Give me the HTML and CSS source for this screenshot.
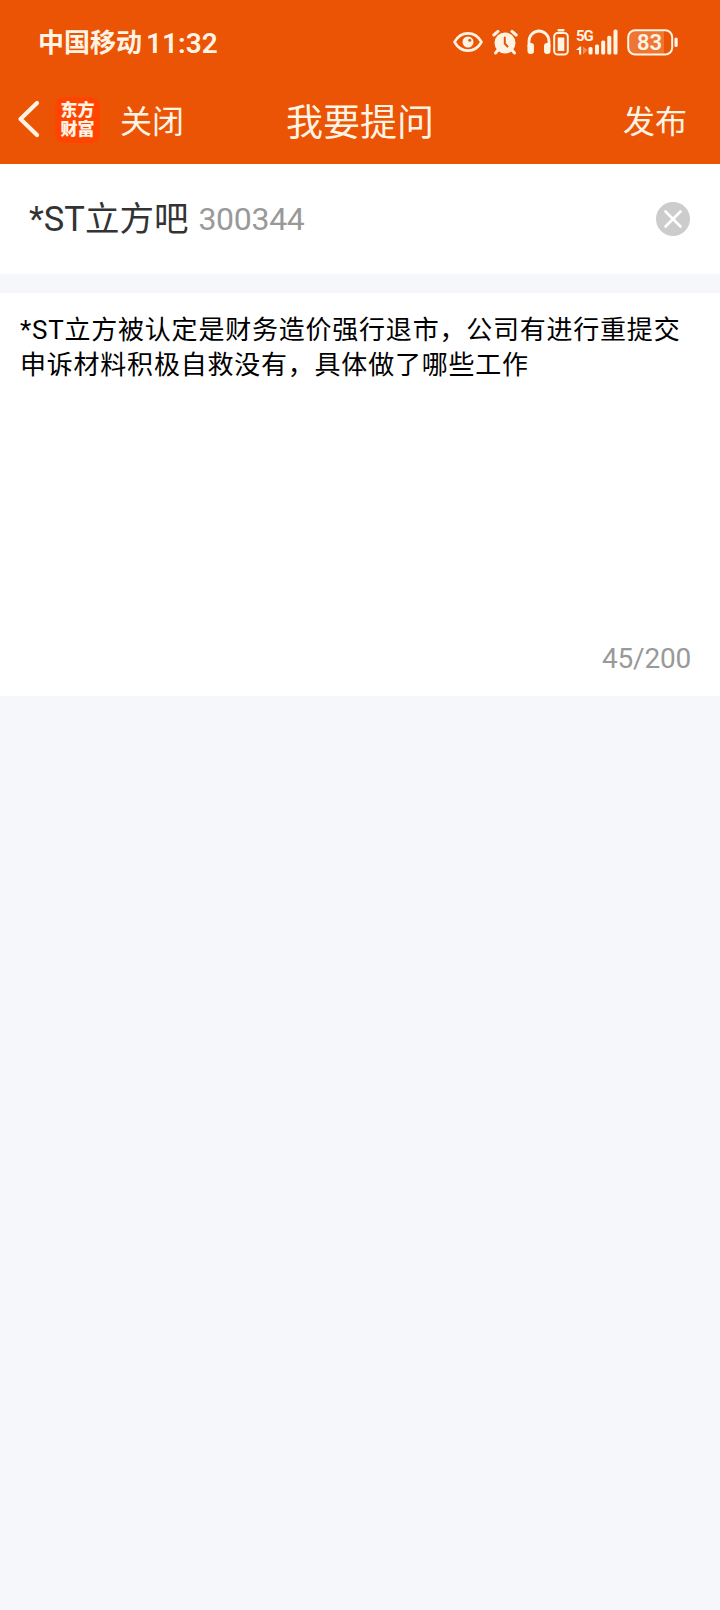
FILE: index.html
```html
<!DOCTYPE html>
<html lang="zh-CN">
<head>
    <meta charset="UTF-8">
    <meta name="viewport" content="width=device-width, initial-scale=1.0">
    <title>我要提问</title>
    <link rel="stylesheet" href="styles.css">
</head>
<body>
    <header class="header">
        <div class="status-bar">
            <span class="carrier">中国移动</span>
            <span class="clock">11:32</span>
            <div class="status-icons">
                <svg class="icon-eye" width="30" height="26" viewBox="0 0 30 26">
                    <path d="M1.5 13C8 1.5 22 1.5 28.5 13C22 24.5 8 24.5 1.5 13Z" fill="none" stroke="currentColor" stroke-width="2.6" stroke-linejoin="round"/>
                    <circle cx="15" cy="13" r="5.5" fill="currentColor"/>
                    <circle cx="16.8" cy="11.2" r="1.5" fill="#ea5404"/>
                </svg>
                <svg class="icon-alarm" width="26" height="26" viewBox="0 0 26 26">
                    <circle cx="13" cy="14" r="10.5" fill="currentColor"/>
                    <path d="M1.8 6L6 2.4M20 2.4L24.2 6" stroke="currentColor" stroke-width="3" stroke-linecap="round"/>
                    <path d="M6 21L3.5 24M20 21L22.5 24" stroke="currentColor" stroke-width="3" stroke-linecap="round"/>
                    <path d="M12.8 8.5V14.5L15.5 17.5" fill="none" stroke="#ea5404" stroke-width="2" stroke-linecap="round"/>
                </svg>
                <svg class="icon-headphones" width="24" height="26" viewBox="0 0 24 26">
                    <path d="M2 18V12.5A10 10.5 0 0 1 22 12.5V18" fill="none" stroke="currentColor" stroke-width="2.8"/>
                    <rect x="0.5" y="14" width="6.5" height="11" rx="3" fill="currentColor"/>
                    <rect x="17" y="14" width="6.5" height="11" rx="3" fill="currentColor"/>
                </svg>
                <svg class="icon-device" width="16" height="27" viewBox="0 0 16 27">
                    <rect x="4.5" y="0" width="7" height="2.5" rx="1" fill="currentColor"/>
                    <rect x="1.2" y="4" width="13.6" height="21.5" rx="3.5" fill="none" stroke="currentColor" stroke-width="2"/>
                    <rect x="4.7" y="8.5" width="6.6" height="13.5" fill="currentColor"/>
                </svg>
                <div class="signal">
                    <span class="network">5G</span>
                    <svg class="icon-signal" width="42" height="27" viewBox="0 0 42 27">
                        <path d="M0 21L4 17.5H5.2V25.5H3V21Z" fill="currentColor"/>
                        <path d="M7 17.5L11.5 21L7 25.5Z" fill="currentColor" opacity="0.4"/>
                        <rect x="12.5" y="18" width="4" height="7.5" rx="1.5" fill="currentColor"/>
                        <rect x="19" y="15.5" width="4" height="10" rx="1.5" fill="currentColor"/>
                        <rect x="25.2" y="11.5" width="4" height="14" rx="1.5" fill="currentColor"/>
                        <rect x="31.3" y="6.7" width="4" height="18.8" rx="1.5" fill="currentColor"/>
                        <rect x="37.5" y="0.5" width="4" height="25" rx="1.5" fill="currentColor"/>
                    </svg>
                </div>
                <svg class="icon-battery" width="52" height="27" viewBox="0 0 52 27">
                    <path d="M8 2H37V25H8A6 6 0 0 1 2 19V8A6 6 0 0 1 8 2Z" fill="currentColor" opacity="0.22"/>
                    <rect x="1.2" y="1.2" width="44" height="24.3" rx="7" fill="none" stroke="currentColor" stroke-width="2"/>
                    <rect x="47.5" y="8.5" width="3.2" height="9.5" rx="1.6" fill="currentColor"/>
                    <text class="battery-level" x="22.6" y="21" text-anchor="middle">83</text>
                </svg>
            </div>
        </div>
        <nav class="nav-bar">
            <div class="nav-left">
                <svg class="back" width="23" height="38" viewBox="0 0 23 38">
                    <path d="M20 3L3.5 19L20 35" fill="none" stroke="currentColor" stroke-width="4.2" stroke-linecap="round" stroke-linejoin="round"/>
                </svg>
                <div class="logo"><span>东方</span><span>财富</span></div>
                <span class="close">关闭</span>
            </div>
            <h1 class="title">我要提问</h1>
            <span class="publish">发布</span>
        </nav>
    </header>

    <section class="stock">
        <span class="stock-name">*ST立方吧</span>
        <span class="stock-code">300344</span>
        <svg class="clear" width="34" height="34" viewBox="0 0 34 34">
            <circle cx="17" cy="17" r="17" fill="#cccccc"/>
            <path d="M9.5 9.5L24.5 24.5M24.5 9.5L9.5 24.5" stroke="#fff" stroke-width="2.6" stroke-linecap="round"/>
        </svg>
    </section>

    <section class="editor">
        <p class="question">*ST立方被认定是财务造价强行退市，公司有进行重提交<br>申诉材料积极自救没有，具体做了哪些工作</p>
        <div class="counter">45/200</div>
    </section>
</body>
</html>
```
FILE: styles.css
```css
* {
    box-sizing: border-box;
    margin: 0;
    padding: 0;
}

body {
    font-family: Roboto, "Noto Sans CJK SC", sans-serif;
    background-color: #f6f7fa;
    min-height: 1610px;
}

svg {
    display: block;
    flex-shrink: 0;
}

.header {
    height: 164px;
    background-color: #ea5404;
    color: #fff3e4;
}

.status-bar {
    display: flex;
    align-items: center;
    height: 84px;
    padding: 0 41px 0 38px;
}

.carrier {
    padding-top: 2px;
    font-size: 26px;
    font-weight: 600;
    line-height: 84px;
}

.clock {
    margin-left: 4px;
    padding-top: 2px;
    font-size: 28px;
    font-weight: 600;
}

.status-icons {
    display: flex;
    align-items: center;
    margin-left: auto;
}

.icon-alarm {
    margin-left: 9px;
}

.icon-headphones {
    margin-left: 9px;
}

.icon-device {
    margin-left: 2px;
}

.signal {
    display: grid;
    margin-left: 7px;
}

/* network label sits in the free corner above the short bars */
.network,
.icon-signal {
    grid-area: 1 / 1;
}

.network {
    font-size: 15px;
    font-weight: 700;
    line-height: 15px;
    letter-spacing: -1px;
}

.icon-battery {
    margin-left: 9px;
}

.battery-level {
    font-size: 22px;
    font-weight: 600;
    fill: currentColor;
}

.nav-bar {
    display: grid;
    grid-template-columns: 1fr auto 1fr;
    align-items: center;
    height: 72px;
    padding: 0 33px;
}

.nav-left {
    display: flex;
    align-items: center;
    margin-left: -16px;
}

.back {
    margin-top: -2px;
}

.logo {
    display: flex;
    flex-direction: column;
    align-items: center;
    justify-content: center;
    width: 45px;
    height: 46px;
    margin: -1px 0 0 15px;
    border-radius: 9px;
    background-color: #ff4400;
    font-size: 17px;
    font-weight: 900;
    line-height: 19px;
}

.close {
    margin: -2px 0 0 20px;
    font-size: 32px;
}

.title {
    margin-top: -1px;
    font-size: 37px;
    font-weight: 400;
}

.publish {
    justify-self: end;
    margin-top: -2px;
    font-size: 32px;
}

.stock {
    display: flex;
    align-items: center;
    height: 110px;
    padding: 0 30px 0 29px;
    background-color: #fff;
}

.stock-name {
    padding-bottom: 7px;
    font-size: 34.5px;
    color: #333;
}

.stock-code {
    margin-left: 10px;
    font-size: 32px;
    letter-spacing: -0.3px;
    color: #999;
}

.clear {
    margin-left: auto;
}

.editor {
    display: flex;
    flex-direction: column;
    justify-content: space-between;
    height: 403px;
    margin-top: 19px;
    padding: 20px 20px 21px;
    background-color: #fff;
}

.question {
    font-size: 26px;
    line-height: 35px;
    letter-spacing: 0.78px;
    white-space: nowrap;
    color: #000;
}

.counter {
    padding-right: 9px;
    font-size: 28px;
    letter-spacing: -0.2px;
    text-align: right;
    color: #999;
}
```
